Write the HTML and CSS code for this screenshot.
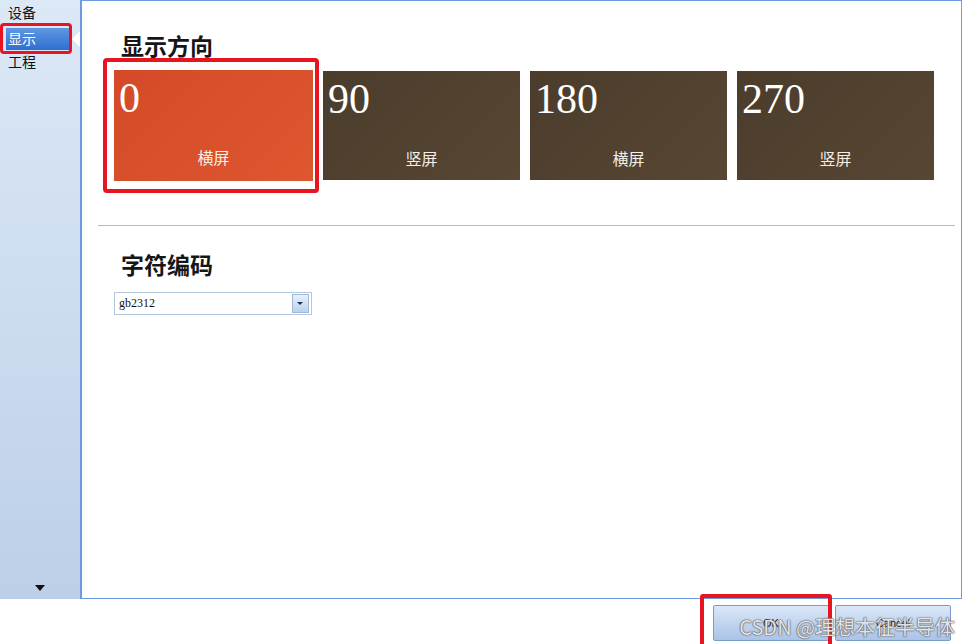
FILE: index.html
```html
<!DOCTYPE html>
<html lang="zh-CN">
<head>
    <meta charset="UTF-8">
    <meta name="viewport" content="width=device-width, initial-scale=1.0">
    <title>设置</title>
    <link rel="stylesheet" href="styles.css">
</head>
<body>
    <div class="window">
        <div class="top">
            <div class="sidebar">
                <div class="nav-item">设备</div>
                <div class="nav-item active">显示</div>
                <div class="nav-item">工程</div>
                <div class="nav-spacer"></div>
                <div class="nav-down"></div>
            </div>

            <div class="panel">
                <h2 class="section-title">显示方向</h2>
                <div class="tiles">
                    <div class="tile selected">
                        <div class="tile-num">0</div>
                        <div class="tile-label">横屏</div>
                    </div>
                    <div class="tile">
                        <div class="tile-num">90</div>
                        <div class="tile-label">竖屏</div>
                    </div>
                    <div class="tile">
                        <div class="tile-num">180</div>
                        <div class="tile-label">横屏</div>
                    </div>
                    <div class="tile">
                        <div class="tile-num">270</div>
                        <div class="tile-label">竖屏</div>
                    </div>
                </div>

                <div class="divider"></div>

                <h2 class="section-title second">字符编码</h2>
                <div class="select">
                    <span class="select-text">gb2312</span>
                    <span class="select-btn"></span>
                </div>
            </div>
        </div>

        <div class="bottom">
            <button class="btn ok">OK</button>
            <button class="btn">Cancel</button>
            <div class="watermark">CSDN @理想本征半导体</div>
        </div>
    </div>
</body>
</html>
```

FILE: styles.css
```css
body {
    margin: 0;
    font-family: "Noto Sans CJK SC", "Liberation Sans", sans-serif;
    background-color: white;
}

.window {
    width: 971px;
    height: 644px;
    display: flex;
    flex-direction: column;
    overflow: hidden;
}

.top {
    display: flex;
    height: 599px;
}

/* 左侧导航 */
.sidebar {
    width: 80px;
    background: linear-gradient(to bottom, #dce8f6 0%, #cddcf0 50%, #bccfe8 100%);
    display: flex;
    flex-direction: column;
    padding-top: 2px;
    box-sizing: border-box;
}

.nav-item {
    position: relative;
    height: 25px;
    line-height: 20px;
    padding-left: 8px;
    font-size: 14px;
    color: #111;
}

.nav-item.active {
    margin: 1px 8px 1px 6px;
    height: 22px;
    padding-left: 2px;
    background: linear-gradient(to bottom, #5f97e0, #2f6fd2);
    color: white;
}

/* 红色标注框 */
.nav-item.active::before {
    content: "";
    position: absolute;
    left: -6px;
    top: -5px;
    width: 66px;
    height: 25px;
    border: 3px solid #e8141f;
    border-radius: 4px;
}

/* 选中项右侧的小三角 */
.nav-item.active::after {
    content: "";
    position: absolute;
    right: -8px;
    top: 3px;
    border-top: 8px solid transparent;
    border-bottom: 8px solid transparent;
    border-right: 8px solid #ffffff;
}

.nav-spacer {
    flex: 1;
}

.nav-down {
    align-self: center;
    margin-bottom: 8px;
    border-left: 5px solid transparent;
    border-right: 5px solid transparent;
    border-top: 6px solid #111;
}

/* 右侧面板 */
.panel {
    width: 882px;
    border: 1px solid #6e9be0;
    border-left-width: 2px;
    box-sizing: border-box;
    background-color: white;
    padding: 0 6px 0 16px;
}

.section-title {
    margin: 30px 0 0 23px;
    font-size: 23px;
    font-weight: 700;
    line-height: 28px;
    color: #161616;
}

.section-title.second {
    margin-top: 24px;
}

.tiles {
    display: flex;
    gap: 10px;
    margin: 12px 0 0 16px;
}

.tile {
    position: relative;
    width: 197px;
    height: 109px;
    background: linear-gradient(135deg, #4b3c2c, #574632);
    color: white;
}

.tile.selected {
    width: 199px;
    height: 111px;
    margin-top: -1px;
    background: linear-gradient(135deg, #d44a28, #de5730);
}

.tile.selected::after {
    content: "";
    position: absolute;
    left: -11px;
    top: -12px;
    width: 208px;
    height: 127px;
    border: 4px solid #e8141f;
    border-radius: 4px;
}

.tile-num {
    font-family: "Liberation Serif", serif;
    font-size: 42px;
    line-height: 42px;
    padding: 7px 0 0 5px;
}

.tile-label {
    text-align: center;
    font-size: 16px;
    margin-top: 26px;
    color: #f4efe8;
}

.divider {
    height: 1px;
    background-color: #a3bde0;
    margin: 44px 0 0 0;
}

/* 下拉框 */
.select {
    display: flex;
    align-items: center;
    justify-content: space-between;
    width: 198px;
    height: 23px;
    margin: 14px 0 0 16px;
    border: 1px solid #b3c7de;
    box-sizing: border-box;
    padding: 0 2px 0 4px;
}

.select-text {
    font-family: "Liberation Serif", serif;
    font-size: 12px;
    color: #111;
}

.select-btn {
    position: relative;
    width: 15px;
    height: 17px;
    border: 1px solid #9fb8d8;
    background: linear-gradient(to bottom, #e8f0fb, #bcd1ec);
}

.select-btn::after {
    content: "";
    position: absolute;
    left: 4px;
    top: 7px;
    border-left: 3px solid transparent;
    border-right: 3px solid transparent;
    border-top: 3px solid #1a2f55;
}

/* 底部按钮 */
.bottom {
    position: relative;
    flex: 1;
    display: flex;
    justify-content: flex-end;
    gap: 6px;
    padding: 6px 20px 0 0;
}

.btn {
    position: relative;
    width: 116px;
    height: 36px;
    border: 1px solid #7b9cc8;
    border-radius: 2px;
    background: linear-gradient(to bottom, #dbe7f7, #a9c3e8);
    font-family: "Liberation Sans", sans-serif;
    font-size: 11px;
    color: #111;
}

.btn.ok::after {
    content: "";
    position: absolute;
    left: -14px;
    top: -12px;
    width: 124px;
    height: 50px;
    border: 4px solid #e8141f;
    border-radius: 3px;
}

.watermark {
    position: absolute;
    right: 16px;
    top: 13px;
    font-size: 20px;
    color: rgba(255, 255, 255, 0.85);
    text-shadow: 0 0 1px #555, 0 0 1px #555, 0 0 2px #777;
}
```
